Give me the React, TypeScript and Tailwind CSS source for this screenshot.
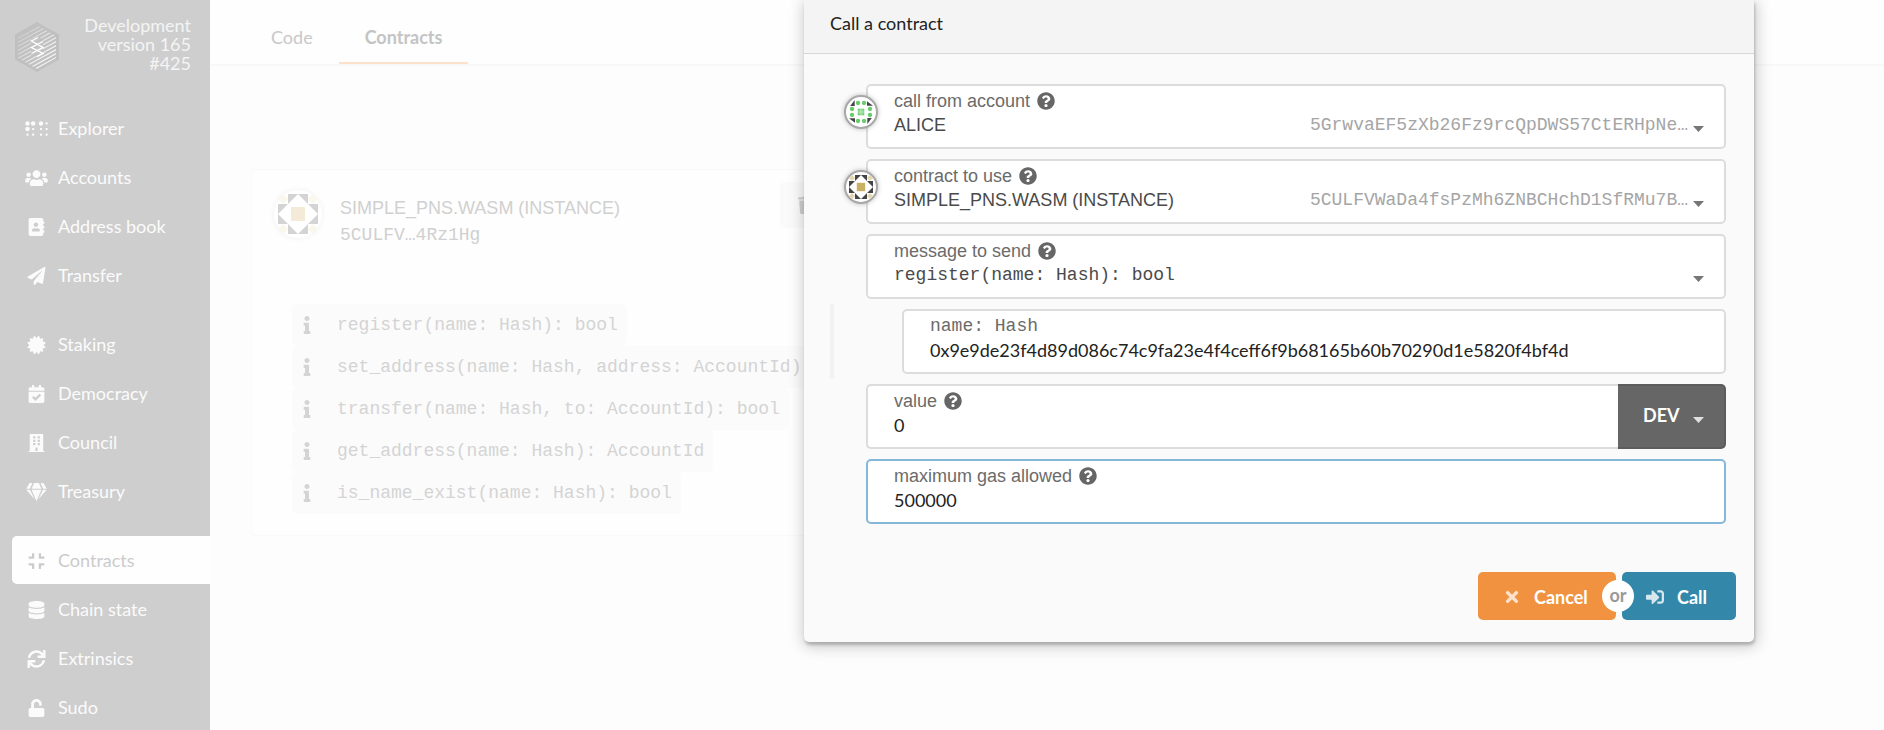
import React from 'react';
import type { IconType } from 'react-icons';
import {
  FaAddressBook,
  FaBraille,
  FaBuilding,
  FaCalendarCheck,
  FaCertificate,
  FaCompress,
  FaDatabase,
  FaGem,
  FaInfo,
  FaPaperPlane,
  FaQuestionCircle,
  FaSignInAlt,
  FaSync,
  FaTimes,
  FaTrash,
  FaUnlock,
  FaUsers,
} from 'react-icons/fa';

type NavItem = { label: string; icon: IconType; active?: boolean };

const navGroups: NavItem[][] = [
  [
    { label: 'Explorer', icon: FaBraille },
    { label: 'Accounts', icon: FaUsers },
    { label: 'Address book', icon: FaAddressBook },
    { label: 'Transfer', icon: FaPaperPlane },
  ],
  [
    { label: 'Staking', icon: FaCertificate },
    { label: 'Democracy', icon: FaCalendarCheck },
    { label: 'Council', icon: FaBuilding },
    { label: 'Treasury', icon: FaGem },
  ],
  [
    { label: 'Contracts', icon: FaCompress, active: true },
    { label: 'Chain state', icon: FaDatabase },
    { label: 'Extrinsics', icon: FaSync },
    { label: 'Sudo', icon: FaUnlock },
  ],
];

const messages = [
  'register(name: Hash): bool',
  'set_address(name: Hash, address: AccountId): bool',
  'transfer(name: Hash, to: AccountId): bool',
  'get_address(name: Hash): AccountId',
  'is_name_exist(name: Hash): bool',
];

const MONO = "font-['Liberation_Mono',monospace]";
const SANS = "font-['Liberation_Sans',sans-serif]";

function Logo() {
  const stripes = Array.from({ length: 19 }, (_, i) => 2 + i * 4);
  return (
    <svg viewBox="0 0 44 50" className="h-[50px] w-11 shrink-0" aria-hidden="true">
      <defs>
        <linearGradient id="logo-fade" x1="0" y1="0" x2="1" y2="1">
          <stop offset="0.2" stopColor="#cfcfcf" />
          <stop offset="0.75" stopColor="#f4f4f4" />
        </linearGradient>
        <mask id="logo-stripes">
          <g stroke="#fff" strokeWidth="1.3">
            {stripes.map((y) => (
              <line key={y} x1="0" y1={y} x2="44" y2={y - 24} />
            ))}
          </g>
        </mask>
      </defs>
      <path d="M22 0 44 12.5v25L22 50 0 37.500v-25z" fill="#c0c0c0" />
      <path d="M22 3 41 14v22L22 47 3 36V14z" fill="url(#logo-fade)" mask="url(#logo-stripes)" />
      <path d="M16 16h12v18H16z" fill="#c0c0c0" opacity="0.75" />
      <g fill="none" stroke="#fff" strokeWidth="1.400">
        <path d="M23 15.500 16.500 19 28 25.500 22 28.500 16.500 31.500" />
        <path d="M28 19.500 16.500 25.500 28 31.500 22 34.500" />
      </g>
    </svg>
  );
}

type Palette = { dark: string; accent: string; soft: string };

function DiamondIdenticon({ dark, accent, soft }: Palette) {
  return (
    <svg viewBox="0 0 40 40" className="h-full w-full" aria-hidden="true">
      {[0, 90, 180, 270].map((angle) => (
        <g key={angle} transform={`rotate(${angle} 20 20)`}>
          <path d="M10 0h10L10 10zM30 0H20l10 10z" fill={dark} />
          <path d="M5 0l5 5-5 5-5-5z" fill={soft} />
        </g>
      ))}
      <path d="M13 13h14v14H13z" fill={accent} />
    </svg>
  );
}

function DotIdenticon() {
  return (
    <svg viewBox="0 0 40 40" className="h-full w-full" aria-hidden="true">
      {[0, 90, 180, 270].map((angle) => (
        <g key={angle} transform={`rotate(${angle} 20 20)`}>
          <path d="M9.500 0v10H2z" fill="#444" />
          <circle cx="15" cy="5" r="3.600" fill="#66cc6c" />
          <circle cx="25" cy="5" r="3.600" fill="#66cc6c" />
          <path d="M14.500 14.500h5v5h-5z" fill="#66cc6c" />
          <circle cx="17" cy="17" r="1" fill="#c8efca" />
        </g>
      ))}
    </svg>
  );
}

function Caret({ className }: { className: string }) {
  return (
    <svg viewBox="0 0 11 6" className={`pointer-events-none h-[6px] w-[11px] ${className}`} aria-hidden="true">
      <path d="M0 0h11L5.500 6z" fill="currentColor" />
    </svg>
  );
}

type FieldProps = {
  id: string;
  label: string;
  help?: boolean;
  mono?: boolean;
  focused?: boolean;
  identicon?: React.ReactNode;
  addon?: React.ReactNode;
  children: React.ReactNode;
};

function Field({ id, label, help, mono, focused, identicon, addon, children }: FieldProps) {
  return (
    <div className="relative flex h-[65px]">
      {identicon && (
        <div className="absolute top-[11px] -left-[22px] z-10 flex size-[34px] items-center justify-center rounded-full border-2 border-[#a8a8a8] bg-white shadow-[0_0_5px_rgba(0,0,0,0.25)]">
          <div className="size-6">{identicon}</div>
        </div>
      )}
      <div
        className={`relative min-w-0 flex-1 border-2 bg-white pt-[2px] pl-[26px] ${
          addon ? 'rounded-l-[5px] border-r-0' : 'rounded-[5px]'
        } ${focused ? 'border-[#85b7d9]' : 'border-[#dcdcdc]'}`}
      >
        <div className="flex h-[25px] items-center gap-[7px] text-[#6b6b6b]">
          <label htmlFor={id} className={`text-[18px] leading-6 ${mono ? MONO : SANS}`}>
            {label}
          </label>
          {help && <FaQuestionCircle className="size-[18px] text-[#666]" />}
        </div>
        {children}
      </div>
      {addon}
    </div>
  );
}

type PickerProps = { id: string; value: string; address?: string; mono?: boolean };

function Picker({ id, value, address, mono }: PickerProps) {
  return (
    <>
      <div className="flex h-6 items-center pr-9">
        <select
          id={id}
          defaultValue={value}
          className={`h-6 min-w-0 flex-1 appearance-none bg-transparent text-[18px] leading-6 text-[#4a4a4a] outline-none ${
            mono ? MONO : SANS
          }`}
        >
          <option>{value}</option>
        </select>
        {address && <span className={`text-[18px] leading-6 text-[#a5a5a5] ${MONO}`}>{address}</span>}
      </div>
      <Caret className="absolute top-10 right-[20px] text-[#767676]" />
    </>
  );
}

function TextBox({ id, value }: { id: string; value: string }) {
  return (
    <input
      id={id}
      type="text"
      defaultValue={value}
      className="block h-6 w-full bg-transparent text-[18px] leading-6 text-[#222] outline-none"
    />
  );
}

function Sidebar() {
  return (
    <aside className="w-[210px] shrink-0 bg-[#cecece]">
      <div className="flex h-[104px] items-start justify-between pt-4 pr-[19px] pl-[15px]">
        <div className="pt-1.5">
          <Logo />
        </div>
        <div className="text-right text-[18px] leading-[19px] text-[#f4f4f4]">
          Development
          <br />
          version 165
          <br />
          #425
        </div>
      </div>
      <nav className="flex flex-col gap-[21px] pl-3">
        {navGroups.map((group) => (
          <ul key={group[0].label} className="flex flex-col gap-px">
            {group.map(({ label, icon: Icon, active }) => (
              <li key={label}>
                <a
                  href={`#${label}`}
                  className={`flex h-12 items-center gap-2.5 rounded-l-[5px] pt-px pl-[13px] text-[18px] ${
                    active ? 'bg-[#fefefe] text-[#cbcbcb]' : 'text-[#fbfbfb]'
                  }`}
                >
                  <Icon className="h-[18px] w-[23px] shrink-0" />
                  {label}
                </a>
              </li>
            ))}
          </ul>
        ))}
      </nav>
    </aside>
  );
}

function ContractCard() {
  return (
    <article className="w-[620px] rounded-[4px] border border-[#f9f9f9] bg-[#fefefe] pt-3 pb-[21px]">
      <header className="flex items-start pl-[22px]">
        <div className="mt-2 flex size-12 shrink-0 items-center justify-center rounded-full bg-white shadow-[0_0_6px_rgba(0,0,0,0.06)]">
          <div className="size-10">
            <DiamondIdenticon dark="#d4d4d4" accent="#f3ebd8" soft="#faf7ec" />
          </div>
        </div>
        <div className="mt-[13px] ml-[18px] text-[18px] leading-[27px] text-[#d0d0d0]">
          <div className={SANS}>SIMPLE_PNS.WASM (INSTANCE)</div>
          <div className={MONO}>5CULFV…4Rz1Hg</div>
        </div>
        <button
          type="button"
          aria-label="Forget contract"
          className="ml-auto flex h-[46px] w-[90px] items-center rounded-[5px] bg-[#fafafa] pl-[18px] text-[#cfcfcf]"
        >
          <FaTrash className="h-[18px] w-4" />
        </button>
      </header>
      <ul className="mt-[55px] ml-10 flex flex-col items-start">
        {messages.map((message) => (
          <li
            key={message}
            className="flex h-[42px] items-center rounded-[5px] bg-[#fbfbfb] pr-[9px] pl-[11px] text-[#d4d4d4]"
          >
            <FaInfo className="mr-[26px] h-[18px] w-2 shrink-0" />
            <span className={`text-[18px] whitespace-nowrap ${MONO}`}>{message}</span>
          </li>
        ))}
      </ul>
    </article>
  );
}

function CallDialog() {
  return (
    <section
      role="dialog"
      aria-labelledby="dialog-title"
      className="w-[950px] rounded-b-[5px] bg-[#fafafa] shadow-[1px_3px_3px_0_rgba(0,0,0,0.2),1px_3px_15px_2px_rgba(0,0,0,0.2)]"
    >
      <h1
        id="dialog-title"
        className="h-[54px] border-b border-[#d6d6d6] bg-[#f4f4f4] pt-2.5 pl-[26px] text-[18px] leading-[27px] text-[#222]"
      >
        Call a contract
      </h1>
      <form className="pt-[30px]">
        <div className="flex flex-col gap-2.5 pr-7 pl-[62px]">
          <Field id="from" label="call from account" help identicon={<DotIdenticon />}>
            <Picker id="from" value="ALICE" address="5GrwvaEF5zXb26Fz9rcQpDWS57CtERHpNe…" />
          </Field>
          <Field
            id="contract"
            label="contract to use"
            help
            identicon={<DiamondIdenticon dark="#444" accent="#c9b063" soft="#e5d8b0" />}
          >
            <Picker
              id="contract"
              value="SIMPLE_PNS.WASM (INSTANCE)"
              address="5CULFVWaDa4fsPzMh6ZNBCHchD1SfRMu7B…"
            />
          </Field>
          <Field id="message" label="message to send" help>
            <Picker id="message" value="register(name: Hash): bool" mono />
          </Field>
          <div className="-my-[5px] -ml-9 border-l-4 border-[#f2f2f2] py-[5px] pl-[68px]">
            <Field id="name" label="name: Hash" mono>
              <TextBox id="name" value="0x9e9de23f4d89d086c74c9fa23e4f4ceff6f9b68165b60b70290d1e5820f4bf4d" />
            </Field>
          </div>
          <Field
            id="value"
            label="value"
            help
            addon={
              <div className="relative w-[108px] shrink-0 text-white">
                <select
                  aria-label="unit"
                  defaultValue="DEV"
                  className="h-full w-full appearance-none rounded-r-[5px] border-2 border-l-0 border-[#5c5c5c] bg-[#666] pb-0.5 pl-[25px] text-[18px] font-bold outline-none"
                >
                  <option>DEV</option>
                </select>
                <Caret className="absolute top-[33px] right-[22px] text-[#e0e0e0]" />
              </div>
            }
          >
            <TextBox id="value" value="0" />
          </Field>
          <Field id="gas" label="maximum gas allowed" help focused>
            <TextBox id="gas" value="500000" />
          </Field>
        </div>
        <div className="mt-12 flex justify-end pr-[18px] pb-[22px] text-[18px] font-bold text-white">
          <button type="button" className="flex h-12 w-[138px] items-center rounded-[5px] bg-[#f19240] pt-0.5 pl-[26px]">
            <FaTimes className="h-[18px] w-4 opacity-75" />
            <span className="ml-3.5">Cancel</span>
          </button>
          <div className="relative w-1.5">
            <span className="absolute top-2 -left-3.5 flex size-8 items-center justify-center rounded-full bg-white pb-0.5 text-[#999]">
              or
            </span>
          </div>
          <button type="submit" className="flex h-12 w-[114px] items-center rounded-[5px] bg-[#3388aa] pt-0.5 pl-6">
            <FaSignInAlt className="size-[18px] opacity-80" />
            <span className="ml-[13px]">Call</span>
          </button>
        </div>
      </form>
    </section>
  );
}

export default function App() {
  return (
    <div className="relative flex h-screen overflow-hidden bg-[#fdfdfd] font-['Lato',sans-serif]">
      <Sidebar />
      <main className="min-w-0 flex-1">
        <nav className="flex h-[66px] items-start border-b-2 border-[#f8f8f8] bg-[#fefefe] pl-[35px] text-[18px] text-[#c8c8c8]">
          <a href="#code" className="flex h-16 items-center border-b-2 border-transparent px-[26px] pt-3">
            Code
          </a>
          <a
            href="#contracts"
            className="flex h-16 items-center border-b-2 border-[#fce1cb] px-[26px] pt-3 font-bold text-[#c4c4c4]"
          >
            Contracts
          </a>
        </nav>
        <div className="pt-[103px] pl-[41px]">
          <ContractCard />
        </div>
      </main>
      <div className="absolute inset-0 flex items-start justify-end pr-[130px]">
        <CallDialog />
      </div>
    </div>
  );
}
